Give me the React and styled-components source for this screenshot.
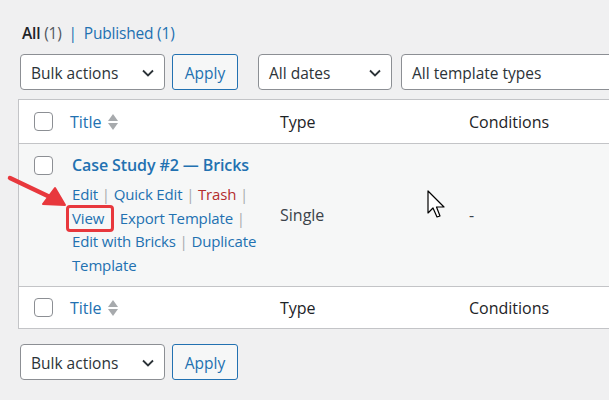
import React from "react";
import styled, { createGlobalStyle } from "styled-components";

const GlobalStyle = createGlobalStyle`
  html, body {
    margin: 0;
    padding: 0;
    background: #f0f0f1;
    overflow: hidden;
  }
  body {
    font-family: "Open Sans", "Noto Sans", sans-serif;
    color: #3c434a;
  }
`;

const Page = styled.div`
  width: 609px;
  height: 400px;
  padding: 23px 0 0 18px;
  box-sizing: border-box;
  overflow: hidden;
  position: relative;
`;

const SubSub = styled.div`
  padding-left: 4px;
  font-size: 15.5px;
  line-height: 20px;
  color: #50575e;
  display: flex;
  gap: 7px;
  align-items: center;
  letter-spacing: -0.2px;
`;

const SubLink = styled.a`
  color: ${(p) => (p.current ? "#1d2327" : "#2271b1")};
  font-weight: ${(p) => (p.current ? 600 : 400)};
  text-decoration: none;
`;

const Count = styled.span`
  color: ${(p) => (p.link ? "#2271b1" : "#50575e")};
  font-weight: 400;
`;

const Sep = styled.span`
  color: #2271b1;
`;

const TableNav = styled.div`
  display: flex;
  align-items: center;
  padding-left: 2px;
  margin: ${(p) => (p.bottom ? "15px 0 0" : "11px 0 9px")};
`;

const Select = styled.div`
  width: ${(p) => p.w}px;
  height: 36px;
  box-sizing: border-box;
  border: 1px solid #8c8f94;
  border-radius: 4px;
  background: #fff;
  display: flex;
  align-items: center;
  justify-content: space-between;
  padding: 1px 10px 0 10px;
  font-size: 15.5px;
  color: #2c3338;
  margin-right: ${(p) => p.mr || 0}px;
  flex-shrink: 0;
`;

const ApplyButton = styled.button`
  height: 36px;
  width: 66px;
  box-sizing: border-box;
  border: 1px solid #2271b1;
  border-radius: 3px;
  background: #f6f7f7;
  color: #2271b1;
  font-family: inherit;
  font-size: 15.5px;
  padding: 1px 0 0;
  margin-left: 7px;
  margin-right: ${(p) => p.mr || 0}px;
  flex-shrink: 0;
`;

const Table = styled.div`
  width: 640px;
  border: 1px solid #c3c4c7;
  border-right: none;
  background: #fff;
  box-sizing: border-box;
`;

const Row = styled.div`
  display: grid;
  grid-template-columns: 51px 210px 189px 1fr;
  align-items: ${(p) => (p.body ? "stretch" : "center")};
  height: ${(p) => p.h}px;
  background: ${(p) => (p.body ? "#f6f7f7" : "#fff")};
  border-top: ${(p) => (p.first ? "none" : "1px solid #c3c4c7")};
  box-sizing: border-box;
  position: relative;
`;

const CheckCell = styled.div`
  display: flex;
  justify-content: flex-end;
  align-items: ${(p) => (p.top ? "flex-start" : "center")};
  padding-top: ${(p) => (p.top ? 12 : 0)}px;
  padding-right: 17px;
`;

const Checkbox = styled.span`
  width: 19px;
  height: 19px;
  box-sizing: border-box;
  border: 1px solid #8c8f94;
  border-radius: 4px;
  background: #fff;
  display: block;
`;

const HeadCell = styled.div`
  font-size: 16px;
  color: ${(p) => (p.link ? "#2271b1" : "#1d2327")};
  display: flex;
  align-items: center;
  gap: 6px;
`;

const SortIcon = styled.span`
  display: inline-flex;
  flex-direction: column;
  gap: 2px;
`;

const Tri = styled.span`
  width: 0;
  height: 0;
  border-left: 5px solid transparent;
  border-right: 5px solid transparent;
  ${(p) =>
    p.up
      ? "border-bottom: 7px solid #a7aaad;"
      : "border-top: 7px solid #a7aaad;"}
`;

const TitleCell = styled.div`
  padding: 9px 0 0 2px;
`;

const PostTitle = styled.a`
  display: block;
  color: #2271b1;
  font-weight: 600;
  font-size: 16px;
  line-height: 24px;
  text-decoration: none;
  margin-bottom: 6px;
  letter-spacing: -0.1px;
`;

const Actions = styled.div`
  font-size: 15px;
  line-height: 23.5px;
  color: #a7aaad;
  width: 200px;
  letter-spacing: -0.15px;
`;

const Action = styled.a`
  color: ${(p) => (p.danger ? "#b32d2e" : "#2271b1")};
  text-decoration: none;
  position: relative;
`;

const Highlight = styled.span`
  position: absolute;
  left: -6px;
  top: -3px;
  right: -10px;
  bottom: -4px;
  border: 3px solid #e8383d;
  border-radius: 4px;
`;

const PlainCell = styled.div`
  font-size: 16px;
  color: #3c434a;
  display: flex;
  align-items: center;
`;

const ArrowMark = styled.svg`
  position: absolute;
  left: 6px;
  top: 170px;
`;

const Pointer = styled.svg`
  position: absolute;
  left: 427px;
  top: 190px;
`;

const Chevron = () => (
  <svg width="12" height="8" viewBox="0 0 12 8">
    <path d="M1 1.5 L6 6.5 L11 1.5" fill="none" stroke="#2c3338" strokeWidth="1.8" />
  </svg>
);

const HeaderRow = ({ first }) => (
  <Row h={first ? 43 : 42} first={first}>
    <CheckCell>
      <Checkbox />
    </CheckCell>
    <HeadCell link>
      Title
      <SortIcon>
        <Tri up />
        <Tri />
      </SortIcon>
    </HeadCell>
    <HeadCell>Type</HeadCell>
    <HeadCell>Conditions</HeadCell>
  </Row>
);

const BulkBar = ({ bottom }) => (
  <TableNav bottom={bottom}>
    <Select w={145}>
      Bulk actions
      <Chevron />
    </Select>
    <ApplyButton mr={20}>Apply</ApplyButton>
    {!bottom && (
      <>
        <Select w={134} mr={9}>
          All dates
          <Chevron />
        </Select>
        <Select w={240}>All template types</Select>
      </>
    )}
  </TableNav>
);

export default function App() {
  return (
    <Page>
      <GlobalStyle />
      <SubSub>
        <SubLink current>
          All <Count>(1)</Count>
        </SubLink>
        <Sep>|</Sep>
        <SubLink>
          Published <Count link>(1)</Count>
        </SubLink>
      </SubSub>
      <BulkBar />
      <Table>
        <HeaderRow first />
        <Row h={143} body>
          <CheckCell top>
            <Checkbox />
          </CheckCell>
          <TitleCell>
            <PostTitle>Case Study #2 — Bricks</PostTitle>
            <Actions>
              <Action>Edit</Action> | <Action>Quick Edit</Action> |{" "}
              <Action danger>Trash</Action> |{" "}
              <Action>
                View
                <Highlight />
              </Action>{" "}
              | <Action>Export Template</Action> |{" "}
              <Action>Edit with Bricks</Action> |{" "}
              <Action>Duplicate Template</Action>
            </Actions>
          </TitleCell>
          <PlainCell>Single</PlainCell>
          <PlainCell>-</PlainCell>
        </Row>
        <HeaderRow />
      </Table>
      <BulkBar bottom />

      <ArrowMark width="64" height="40" viewBox="0 0 64 40">
        <path d="M4 8 L46 28" stroke="#e8383d" strokeWidth="4.5" strokeLinecap="round" />
        <path d="M59 35 L37 34 L49 18 Z" fill="#e8383d" stroke="#e8383d" strokeWidth="2" strokeLinejoin="round" />
      </ArrowMark>
      <Pointer width="20" height="30" viewBox="0 0 20 30">
        <path
          d="M1 1 L1 23 L6 18 L10 27 L13 26 L9.5 17 L17 17 Z"
          fill="#fff"
          stroke="#000"
          strokeWidth="1.2"
          strokeLinejoin="round"
        />
      </Pointer>
    </Page>
  );
}
